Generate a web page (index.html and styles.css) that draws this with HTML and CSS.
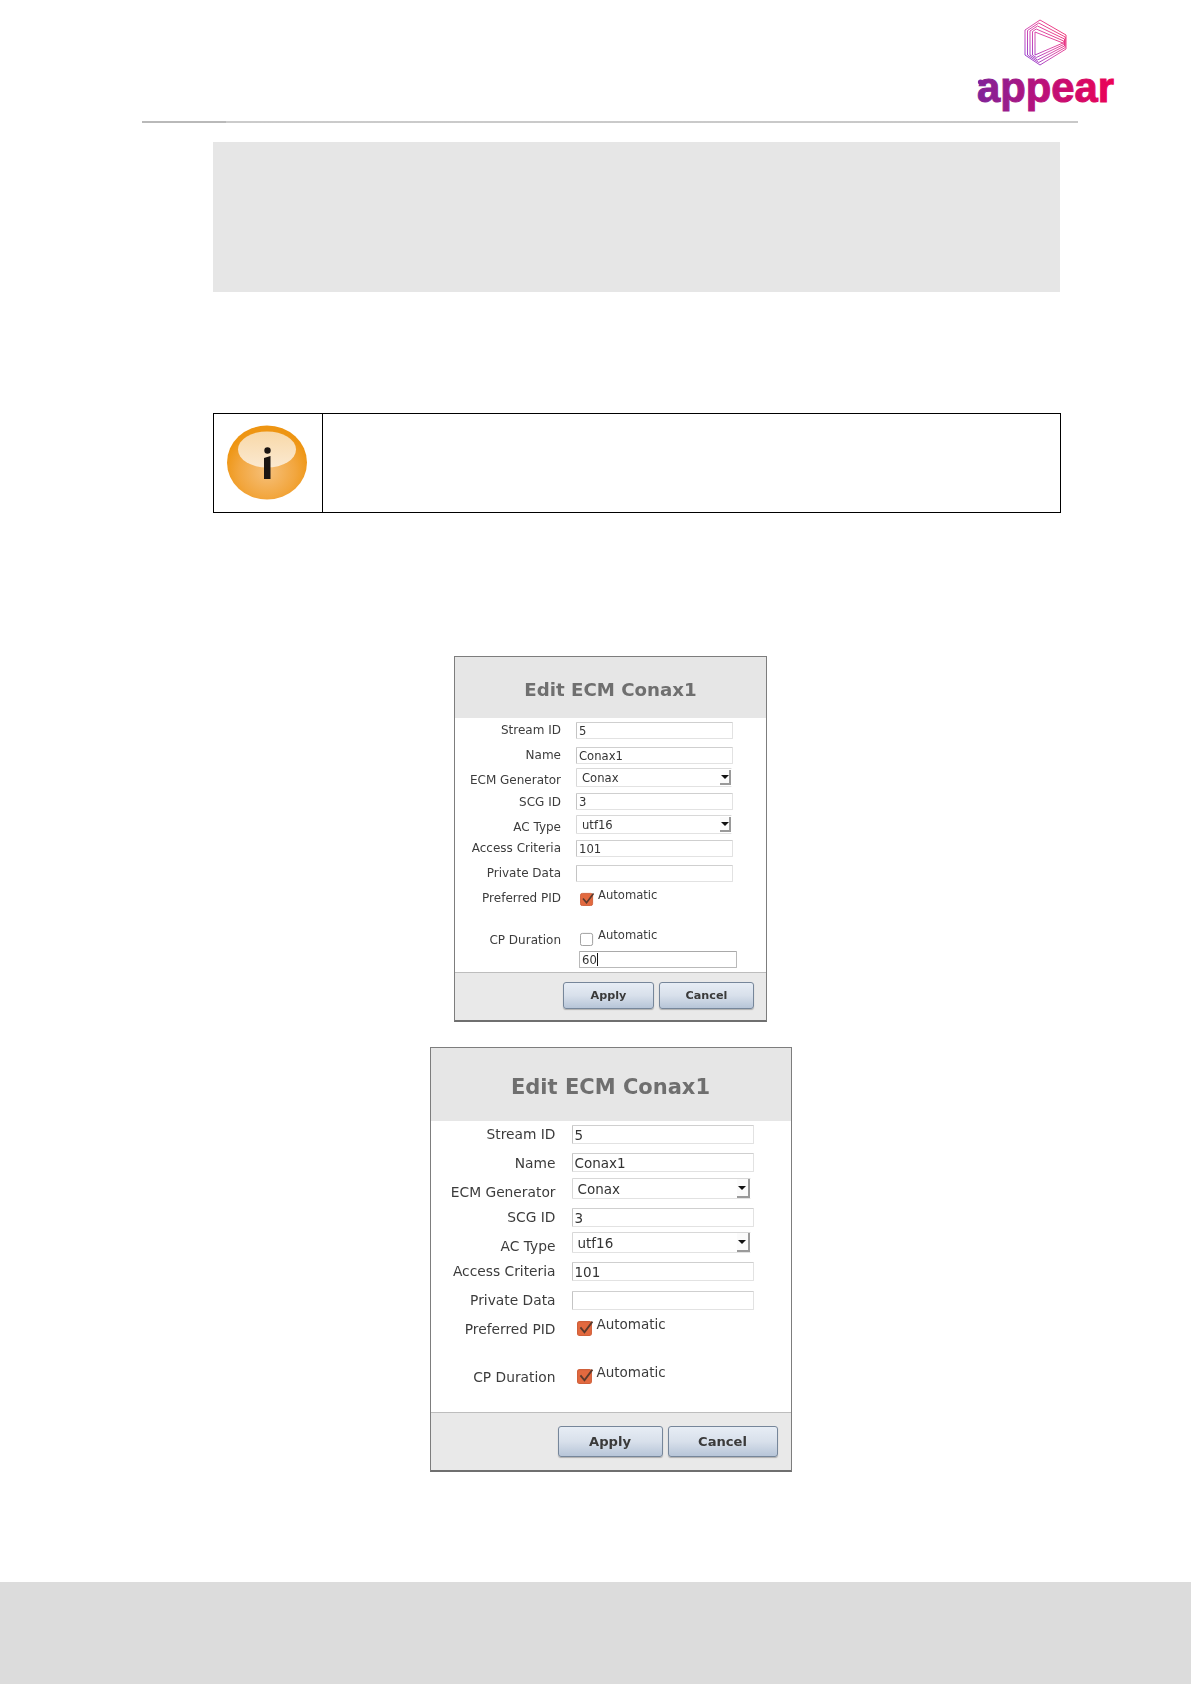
FILE: index.html
```html
<!DOCTYPE html>
<html lang="en">
<head>
<meta charset="utf-8">
<title>Edit ECM Conax1</title>
<link rel="stylesheet" href="styles.css">
</head>
<body>
<div class="page">
  <header class="page-header">
    <svg class="logo" viewBox="0 0 140 92" width="140" height="92" aria-label="appear">
      <defs>
        <linearGradient id="markGrad" gradientUnits="userSpaceOnUse" x1="48" y1="42" x2="88" y2="6">
          <stop offset="0" stop-color="#8228cc"/>
          <stop offset="0.5" stop-color="#d43aa6"/>
          <stop offset="1" stop-color="#f5205f"/>
        </linearGradient>
        <linearGradient id="wordGrad" gradientUnits="userSpaceOnUse" x1="0" y1="0" x2="137" y2="0">
          <stop offset="0" stop-color="#7f2399"/>
          <stop offset="0.5" stop-color="#bd1079"/>
          <stop offset="1" stop-color="#ec0355"/>
        </linearGradient>
      </defs>
      <g class="logo-mark">
        <path d="M63 0L89 15V29L63 45L48 35V10Z"/>
        <path d="M61.75 3L88.25 17V27.5L61.75 42.5L50.5 35V10.5Z"/>
        <path d="M60.5 6L87.5 19V26L60.5 40L53 35V11Z"/>
        <path d="M59.25 9L86.75 21V24.5L59.25 37.5L55.5 35V11.5Z"/>
        <path d="M58 12L86 23L58 35Z"/>
      </g>
      <circle class="logo-dot" cx="3.5" cy="62" r="2.6"/>
      <text class="logo-word" x="0" y="82" textLength="137" lengthAdjust="spacingAndGlyphs">appear</text>
    </svg>
  </header>
  <div class="rule"></div>
  <div class="grey-box"></div>

  <div class="note">
    <div class="note-icon">
      <svg viewBox="0 0 80 75" width="80" height="75" aria-hidden="true">
        <defs>
          <radialGradient id="ballGrad" cx="0.5" cy="0.62" r="0.55">
            <stop offset="0" stop-color="#f6c07a"/>
            <stop offset="0.65" stop-color="#f2a63e"/>
            <stop offset="1" stop-color="#ee9512"/>
          </radialGradient>
          <linearGradient id="shineGrad" x1="0" y1="0" x2="0" y2="1">
            <stop offset="0" stop-color="#f8d8a8"/>
            <stop offset="1" stop-color="#fbe9d0"/>
          </linearGradient>
        </defs>
        <ellipse cx="40" cy="37.5" rx="40" ry="37" fill="url(#ballGrad)"/>
        <ellipse cx="40" cy="24.5" rx="29" ry="18" fill="url(#shineGrad)"/>
        <circle cx="40.5" cy="25.5" r="3.2" fill="#1b1512"/>
        <path d="M37 33L43.5 31V54L37 54Z" fill="#1b1512"/>
      </svg>
    </div>
    <div class="note-body"></div>
  </div>

  <main class="figures">
    <section class="dialog dialog-small">
      <h2 class="dialog-title">Edit ECM Conax1</h2>
      <div class="dialog-form">
        <div class="labels">
          <span>Stream ID</span><span>Name</span><span>ECM Generator</span><span>SCG ID</span><span>AC Type</span><span>Access Criteria</span><span>Private Data</span><span>Preferred PID</span><span>CP Duration</span>
        </div>
        <div class="fields">
          <div class="field">5</div>
          <div class="field">Conax1</div>
          <div class="field select"><span>Conax</span><i class="arrow"></i></div>
          <div class="field">3</div>
          <div class="field select"><span>utf16</span><i class="arrow"></i></div>
          <div class="field">101</div>
          <div class="field"></div>
          <div class="auto">
            <svg class="check" viewBox="0 0 15 15" aria-hidden="true"><rect x="0.5" y="1.5" width="13" height="13" rx="2" fill="#e2693f" stroke="#d0603a"/><path d="M3.2 7L7 11.5L14.5 1.5" fill="none" stroke="#5c3a2c" stroke-width="1.8"/></svg>
            <span>Automatic</span>
          </div>
          <div class="auto">
            <svg class="check" viewBox="0 0 15 15" aria-hidden="true"><rect x="0.5" y="1.5" width="13" height="13" rx="2" fill="#fff" stroke="#999"/></svg>
            <span>Automatic</span>
          </div>
          <div class="field field-duration">60<i class="caret"></i></div>
        </div>
      </div>
      <div class="dialog-actions">
        <button class="btn btn-apply" type="button">Apply</button>
        <button class="btn btn-cancel" type="button">Cancel</button>
      </div>
    </section>

    <section class="dialog dialog-large">
      <h2 class="dialog-title">Edit ECM Conax1</h2>
      <div class="dialog-form">
        <div class="labels">
          <span>Stream ID</span><span>Name</span><span>ECM Generator</span><span>SCG ID</span><span>AC Type</span><span>Access Criteria</span><span>Private Data</span><span>Preferred PID</span><span>CP Duration</span>
        </div>
        <div class="fields">
          <div class="field">5</div>
          <div class="field">Conax1</div>
          <div class="field select"><span>Conax</span><i class="arrow"></i></div>
          <div class="field">3</div>
          <div class="field select"><span>utf16</span><i class="arrow"></i></div>
          <div class="field">101</div>
          <div class="field"></div>
          <div class="auto">
            <svg class="check" viewBox="0 0 15 15" aria-hidden="true"><rect x="0.5" y="1.5" width="13" height="13" rx="2" fill="#e2693f" stroke="#d0603a"/><path d="M3.2 7L7 11.5L14.5 1.5" fill="none" stroke="#5c3a2c" stroke-width="1.8"/></svg>
            <span>Automatic</span>
          </div>
          <div class="auto">
            <svg class="check" viewBox="0 0 15 15" aria-hidden="true"><rect x="0.5" y="1.5" width="13" height="13" rx="2" fill="#e2693f" stroke="#d0603a"/><path d="M3.2 7L7 11.5L14.5 1.5" fill="none" stroke="#5c3a2c" stroke-width="1.8"/></svg>
            <span>Automatic</span>
          </div>
        </div>
      </div>
      <div class="dialog-actions">
        <button class="btn btn-apply" type="button">Apply</button>
        <button class="btn btn-cancel" type="button">Cancel</button>
      </div>
    </section>
  </main>

  <footer class="page-footer"></footer>
</div>
</body>
</html>
```

FILE: styles.css
```css
* { box-sizing: border-box; }

html, body {
  margin: 0;
  padding: 0;
  background: #fff;
}

.page {
  width: 1191px;
  height: 1684px;
  display: flex;
  flex-direction: column;
  font-family: "DejaVu Sans", sans-serif;
  overflow: hidden;
}

/* Header */
.page-header {
  height: 121px;
  padding: 20px 74px 0 0;
  display: flex;
  justify-content: flex-end;
  align-items: flex-start;
}

.logo { display: block; overflow: visible; }

.logo-mark path {
  fill: none;
  stroke: url(#markGrad);
  stroke-width: 0.9;
  stroke-linejoin: round;
}

.logo-dot { fill: #83229a; }

.logo-word {
  font-family: "Liberation Sans", sans-serif;
  font-weight: 700;
  font-size: 42px;
  fill: url(#wordGrad);
  stroke: url(#wordGrad);
  stroke-width: 1;
}

.rule {
  height: 2px;
  margin: 0 113px 0 142px;
  background: linear-gradient(to right, #b9b9b9 0, #b9b9b9 9%, #cbcbcb 9%, #c8c8c8 100%);
}

.grey-box {
  width: 847px;
  height: 150px;
  margin: 19px 0 0 213px;
  background: #e6e6e6;
}

/* Note table */
.note {
  width: 848px;
  height: 100px;
  margin: 121px 0 0 213px;
  display: flex;
  border: 1px solid #000;
}

.note-icon {
  width: 109px;
  padding: 0 2px 2px 0;
  border-right: 1px solid #000;
  display: flex;
  align-items: center;
  justify-content: center;
}

.note-icon svg { display: block; }

.note-body { flex: 1; }

/* Figures */
.figures {
  margin-top: 143px;
  padding-left: 30px;
  display: flex;
  flex-direction: column;
  align-items: center;
  gap: 25px;
}

.dialog {
  display: flex;
  flex-direction: column;
  background: #fff;
  border: 1px solid #7d7d7d;
  border-bottom: 2px solid #6f6f6f;
  color: #3c3c3c;
  filter: blur(0.35px);
}

.dialog-title {
  margin: 0;
  display: flex;
  align-items: center;
  justify-content: center;
  background: #e6e6e6;
  color: #6f6f6f;
  font-weight: 700;
}

.dialog-form {
  flex: 1;
  display: flex;
}

.labels,
.fields {
  display: grid;
  align-items: start;
}

.labels { justify-items: end; }
.fields { justify-items: start; }

.field {
  display: flex;
  align-items: center;
  justify-content: space-between;
  background: #fff;
  border: 1px solid #e2e2e2;
  border-top-color: #cfcfcf;
  border-left-color: #c4c4c4;
  border-radius: 1px;
  color: #333;
  white-space: nowrap;
}

.select {
  border-color: #d8d8d8;
  border-right-color: transparent;
  border-bottom-color: #e2e2e2;
}

.arrow {
  display: flex;
  align-items: center;
  justify-content: center;
  align-self: stretch;
  background: #fbfbfb;
  border-right: 2px solid #9a9a9a;
  border-bottom: 2px solid #9a9a9a;
}

.arrow::after {
  content: "";
  border-left: 4px solid transparent;
  border-right: 4px solid transparent;
  border-top: 4px solid #111;
}

.auto {
  display: flex;
  align-items: flex-start;
  color: #3c3c3c;
}

.check { display: block; flex: none; }

.field-duration {
  justify-content: flex-start;
  border-color: #b9b9b9;
  border-top-color: #a9a9a9;
}

.caret {
  display: block;
  width: 1px;
  background: #111;
  align-self: stretch;
  margin: 1px 0;
}

.dialog-actions {
  display: flex;
  justify-content: flex-end;
  background: #e9e9e9;
  border-top: 1px solid #bdbdbd;
}

.btn {
  padding: 0;
  font-family: inherit;
  font-weight: 700;
  color: #3a3a3a;
  background: linear-gradient(to bottom, #e7edf5, #d8e0eb 50%, #b7c5d8);
  border: 1px solid #76869a;
  border-radius: 3px;
  box-shadow: 0 1px 1px rgba(0, 0, 0, 0.25);
}

/* Small dialog */
.dialog-small {
  width: 313px;
  height: 366px;
  font-size: 11.6px;
}

.dialog-small .dialog-title {
  height: 61px;
  padding-top: 4px;
  font-size: 18.2px;
}

.dialog-small .labels {
  width: 106px;
  padding-top: 4px;
  font-size: 12px;
  line-height: 16px;
  grid-template-rows: 25px 25px 22px 25px 21px 25px 25px 42px 16px;
}

.dialog-small .fields {
  margin-left: 15px;
  padding-top: 4px;
  grid-template-rows: 25px 21px 25px 22px 25px 25px 22px 40px 24px 17px;
}

.dialog-small .field {
  width: 157px;
  height: 17px;
  padding-left: 2px;
}

.dialog-small .select {
  width: 156px;
  height: 19px;
  padding-left: 5px;
  padding-right: 0;
}

.dialog-small .arrow { width: 11px; margin: 1px 0; }

.dialog-small .auto {
  margin-left: 4px;
  gap: 4px;
  line-height: 16px;
}

.dialog-small .check {
  width: 14px;
  height: 14px;
  margin-top: 5px;
}

.dialog-small .field-duration {
  width: 158px;
  margin-left: 3px;
}

.dialog-small .dialog-actions {
  height: 48px;
  padding: 9px 12px 0 0;
  gap: 5px;
}

.dialog-small .btn { height: 27px; font-size: 11.2px; }
.dialog-small .btn-apply { width: 91px; }
.dialog-small .btn-cancel { width: 95px; }

/* Large dialog */
.dialog-large {
  width: 362px;
  height: 425px;
  font-size: 13.5px;
}

.dialog-large .dialog-title {
  height: 73px;
  padding-top: 5px;
  font-size: 21px;
}

.dialog-large .labels {
  width: 125px;
  padding-top: 4px;
  font-size: 13.8px;
  line-height: 18px;
  grid-template-rows: 29px 29px 25px 29px 25px 29px 29px 48px 18px;
}

.dialog-large .fields {
  margin-left: 16px;
  padding-top: 4px;
  grid-template-rows: 28px 25px 30px 24px 30px 29px 24px 48px 18px;
}

.dialog-large .field {
  width: 182px;
  height: 19px;
  padding-left: 2px;
}

.dialog-large .select {
  width: 179px;
  height: 21px;
  padding-left: 5px;
  padding-right: 0;
}

.dialog-large .arrow { width: 13px; margin: 0; }

.dialog-large .auto {
  margin-left: 5px;
  gap: 4px;
  line-height: 18px;
}

.dialog-large .check {
  width: 16px;
  height: 16px;
  margin-top: 5px;
}

.dialog-large .dialog-actions {
  height: 58px;
  padding: 13px 13px 0 0;
  gap: 5px;
}

.dialog-large .btn { height: 31px; font-size: 13.1px; }
.dialog-large .btn-apply { width: 105px; }
.dialog-large .btn-cancel { width: 110px; }

/* Footer */
.page-footer {
  margin-top: auto;
  height: 102px;
  background: #dcdcdc;
}
```
